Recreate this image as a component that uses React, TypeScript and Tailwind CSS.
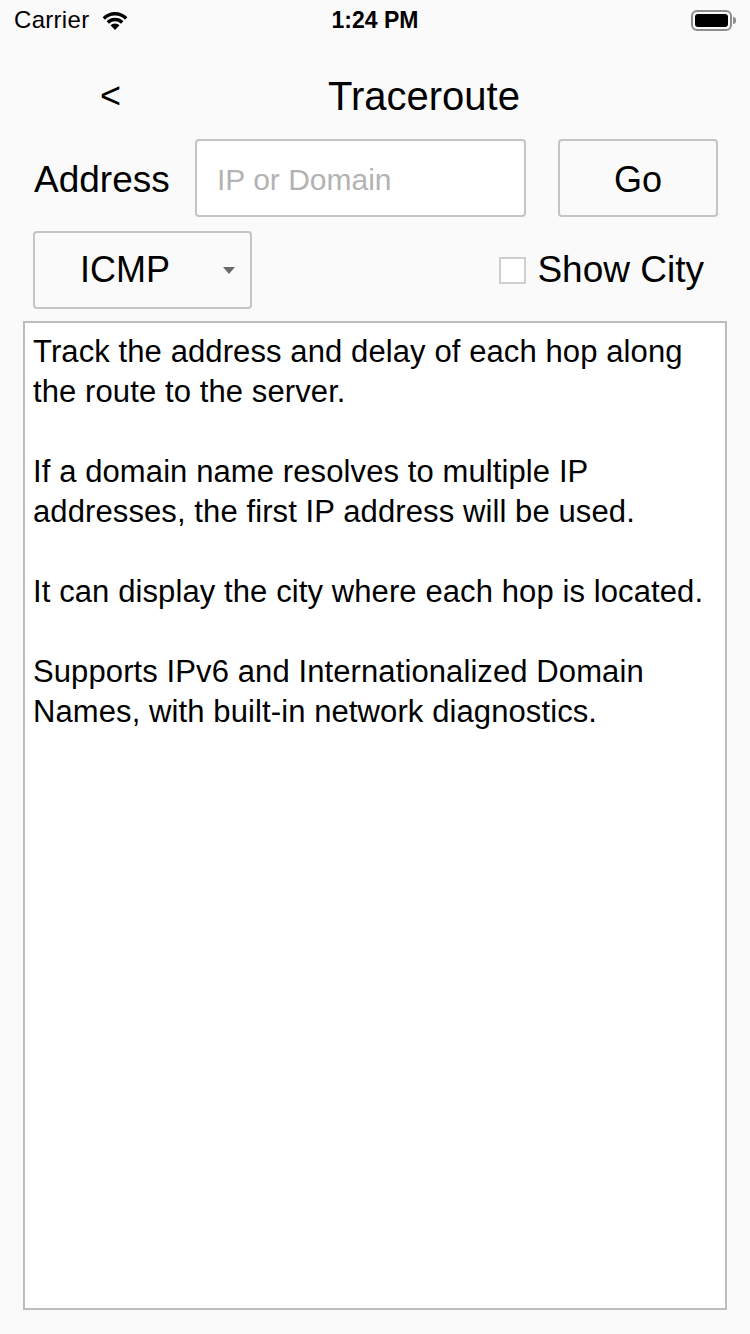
import React from 'react';

const font = { fontFamily: '"Liberation Sans", Arial, sans-serif' };

function Wifi() {
  return (
    <svg width="30" height="22" viewBox="0 0 28 22">
      <path d="M14 21 L9.5 16.2 A6.5 6.5 0 0 1 18.5 16.2 Z" fill="#000" />
      <path d="M5.6 12.3 A12 12 0 0 1 22.4 12.3 L20 14.8 A8.6 8.6 0 0 0 8 14.8 Z" fill="#000" />
      <path d="M1.6 8.2 A17.6 17.6 0 0 1 26.4 8.2 L24 10.7 A14.2 14.2 0 0 0 4 10.7 Z" fill="#000" />
    </svg>
  );
}

function Battery() {
  return (
    <div className="flex items-center">
      <div className="flex h-[21px] w-[41px] items-center justify-center rounded-[6px] border-2 border-[#8e8e8e] p-[2px]">
        <div className="h-full w-full rounded-[3px] bg-black" />
      </div>
      <div className="ml-[1px] h-[7px] w-[3px] rounded-r-sm bg-[#8e8e8e]" />
    </div>
  );
}

export default function App() {
  return (
    <div className="flex h-[1334px] w-[750px] flex-col bg-[#fafafa] text-black" style={font}>
      {/* status bar */}
      <div className="flex h-[40px] items-center justify-between pl-[14px] pr-[14px]">
        <div className="flex w-[200px] items-center gap-[11px] text-[24px] tracking-[0.3px]">
          Carrier
          <Wifi />
        </div>
        <div className="text-[23px] font-semibold">1:24 PM</div>
        <div className="flex w-[200px] justify-end">
          <Battery />
        </div>
      </div>

      {/* nav */}
      <div className="flex h-[94px] items-center pt-[18px]">
        <div className="w-[226px] pl-[100px] text-[36px]">&lt;</div>
        <div className="flex-1 pl-[102px] text-[40px]">Traceroute</div>
      </div>

      {/* address row */}
      <div className="mt-[5px] flex h-[78px] items-center">
        <div className="w-[195px] pl-[34px] pt-[3px] text-[37px]">Address</div>
        <input
          placeholder="IP or Domain"
          className="h-[78px] w-[331px] rounded-[4px] border-2 border-[#c4c4c4] bg-white px-[20px] pt-[3px] text-[30px] placeholder:text-[#b3b3b3] outline-none"
          style={font}
        />
        <button className="ml-[32px] h-[78px] w-[160px] rounded-[4px] border-2 border-[#c4c4c4] bg-[#fafafa] pt-[3px] text-[36px]">
          Go
        </button>
      </div>

      {/* protocol row */}
      <div className="mt-[14px] flex h-[78px] items-center">
        <div className="ml-[33px] flex h-[78px] w-[219px] items-center rounded-[4px] border-2 border-[#c4c4c4] bg-[#fafafa]">
          <span className="w-[180px] text-center text-[36px]">ICMP</span>
          <span className="ml-[8px] border-x-[6px] border-t-[7px] border-x-transparent border-t-[#6b6b6b]" />
        </div>
        <div className="ml-auto mr-[46px] flex items-center gap-[11px]">
          <div className="h-[27px] w-[27px] border-2 border-[#cfcfcf] bg-white" />
          <span className="text-[37px]">Show City</span>
        </div>
      </div>

      {/* output */}
      <div className="mx-[23px] mt-[12px] h-[989px] border-2 border-[#bdbdbd] bg-white px-[8px] pt-[9px] text-[31px] leading-[40px] tracking-[0.1px]">
        <p>Track the address and delay of each hop along the route to the server.</p>
        <p className="mt-[40px]">If a domain name resolves to multiple IP addresses, the first IP address will be used.</p>
        <p className="mt-[40px]">It can display the city where each hop is located.</p>
        <p className="mt-[40px]">Supports IPv6 and Internationalized Domain Names, with built-in network diagnostics.</p>
      </div>
    </div>
  );
}
